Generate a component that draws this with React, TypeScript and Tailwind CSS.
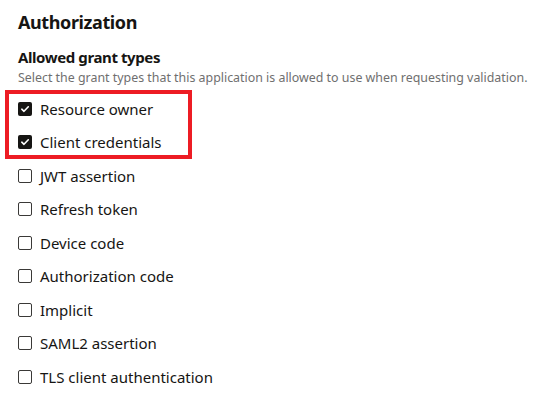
import React from "react";

const grantTypes = [
  { label: "Resource owner", checked: true },
  { label: "Client credentials", checked: true },
  { label: "JWT assertion", checked: false },
  { label: "Refresh token", checked: false },
  { label: "Device code", checked: false },
  { label: "Authorization code", checked: false },
  { label: "Implicit", checked: false },
  { label: "SAML2 assertion", checked: false },
  { label: "TLS client authentication", checked: false },
];

const Checkbox = ({ checked }: { checked: boolean }) => {
  if (checked) {
    return (
      <span className="flex h-[14px] w-[14px] items-center justify-center rounded-[2px] bg-[#161513]">
        <svg width="10" height="10" viewBox="0 0 10 10" fill="none">
          <path
            d="M1.8 5.2 L4 7.3 L8.3 2.8"
            stroke="white"
            strokeWidth="1.6"
            strokeLinecap="round"
            strokeLinejoin="round"
          />
        </svg>
      </span>
    );
  }
  return (
    <span className="block h-[14px] w-[14px] rounded-[2px] border-[1.5px] border-[#3a3937] bg-white" />
  );
};

export default function App() {
  return (
    <div
      className="relative h-[400px] w-[554px] overflow-hidden bg-white pl-[18px] pt-[9px] text-[#161513]"
      style={{ fontFamily: '"Noto Sans", "Open Sans", sans-serif' }}
    >
      <h1 className="text-[18px] font-bold leading-[26px] tracking-[-0.4px]">Authorization</h1>

      <h2 className="mt-[11px] text-[15px] font-bold leading-[22px] tracking-[-0.4px]">
        Allowed grant types
      </h2>
      <p className="mt-[2px] text-[12.4px] leading-[16px] text-[#6f6f6f]">
        Select the grant types that this application is allowed to use when requesting validation.
      </p>

      <div className="mt-[6px] flex flex-col">
        {grantTypes.map((g) => (
          <label key={g.label} className="flex h-[33.5px] items-center gap-[8px]">
            <Checkbox checked={g.checked} />
            <span className="text-[15px] leading-[20px]">{g.label}</span>
          </label>
        ))}
      </div>

      {/* highlight box drawn over the first two options */}
      <div className="absolute left-[5px] top-[90px] h-[69px] w-[187px] border-[4px] border-[#ed1c24]" />
    </div>
  );
}
